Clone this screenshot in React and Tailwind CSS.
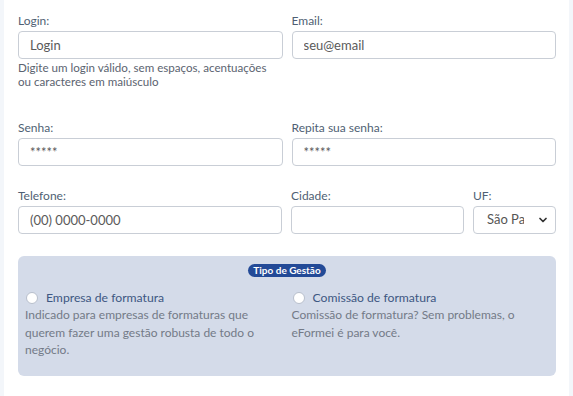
import { ChevronDown } from 'lucide-react';

const font = { fontFamily: 'Lato, "Open Sans", sans-serif' };

function Field({ label, placeholder, className = '', children }) {
  return (
    <div className={`flex flex-col ${className}`}>
      <label className="text-[12px] leading-[14px] text-[#4f5f74] mb-[3px]">{label}</label>
      {children || (
        <input
          placeholder={placeholder}
          className="h-[28px] w-full rounded-[4px] border border-[#c9ced6] bg-white px-[11px] text-[13px] text-[#555] placeholder:text-[#5a5a5a] outline-none"
        />
      )}
    </div>
  );
}

function Opcao({ titulo, texto }) {
  return (
    <div>
      <label className="flex items-center gap-[8px] pl-[1px]">
        <span className="w-[12px] h-[12px] rounded-full bg-white border border-[#b8bfcc]" />
        <span className="text-[12.2px] leading-[16px] text-[#3d5782]">{titulo}</span>
      </label>
      <p className="text-[12px] leading-[17.5px] text-[#737a87]">{texto}</p>
    </div>
  );
}

export default function App() {
  return (
    <div className="w-[573px] h-[396px] bg-[#f3f6fa] px-[4px]" style={font}>
      <div className="h-full bg-white pl-[14px] pr-[13px] pt-[14px]">
        <div className="grid grid-cols-2 gap-x-[9px]">
          <div>
            <Field label="Login:" placeholder="Login" />
            <p className="mt-[2px] w-[258px] text-[11.6px] leading-[14px] text-[#5b6370]">
              Digite um login válido, sem espaços, acentuações ou caracteres em maiúsculo
            </p>
          </div>
          <Field label="Email:" placeholder="seu@email" />
        </div>

        <div className="grid grid-cols-2 gap-x-[9px] mt-[32px]">
          <Field label="Senha:" placeholder="*****" />
          <Field label="Repita sua senha:" placeholder="*****" />
        </div>

        <div className="flex gap-x-[9px] mt-[23px]">
          <Field label="Telefone:" placeholder="(00) 0000-0000" className="w-[264px]" />
          <Field label="Cidade:" placeholder="" className="w-[173px]" />
          <Field label="UF:" className="flex-1">
            <div className="h-[28px] rounded-[4px] border border-[#c9ced6] bg-white flex items-center pl-[13px] pr-[6px]">
              <span className="text-[13px] text-[#555] w-[37px] overflow-hidden whitespace-nowrap">São Paulo</span>
              <ChevronDown className="ml-auto w-[12px] h-[12px] text-[#333]" strokeWidth={3.5} />
            </div>
          </Field>
        </div>

        <div className="mt-[22px] h-[120px] rounded-[6px] bg-[#d4dbe9] px-[7px] pt-[8px]">
          <div className="flex justify-center">
            <span className="rounded-full bg-[#234a97] px-[5px] text-[10px] leading-[13px] font-bold text-white">
              Tipo de Gestão
            </span>
          </div>
          <div className="grid grid-cols-2 gap-x-[9px] mt-[13px]">
            <Opcao
              titulo="Empresa de formatura"
              texto="Indicado para empresas de formaturas que querem fazer uma gestão robusta de todo o negócio."
            />
            <Opcao
              titulo="Comissão de formatura"
              texto="Comissão de formatura? Sem problemas, o eFormei é para você."
            />
          </div>
        </div>
      </div>
    </div>
  );
}
